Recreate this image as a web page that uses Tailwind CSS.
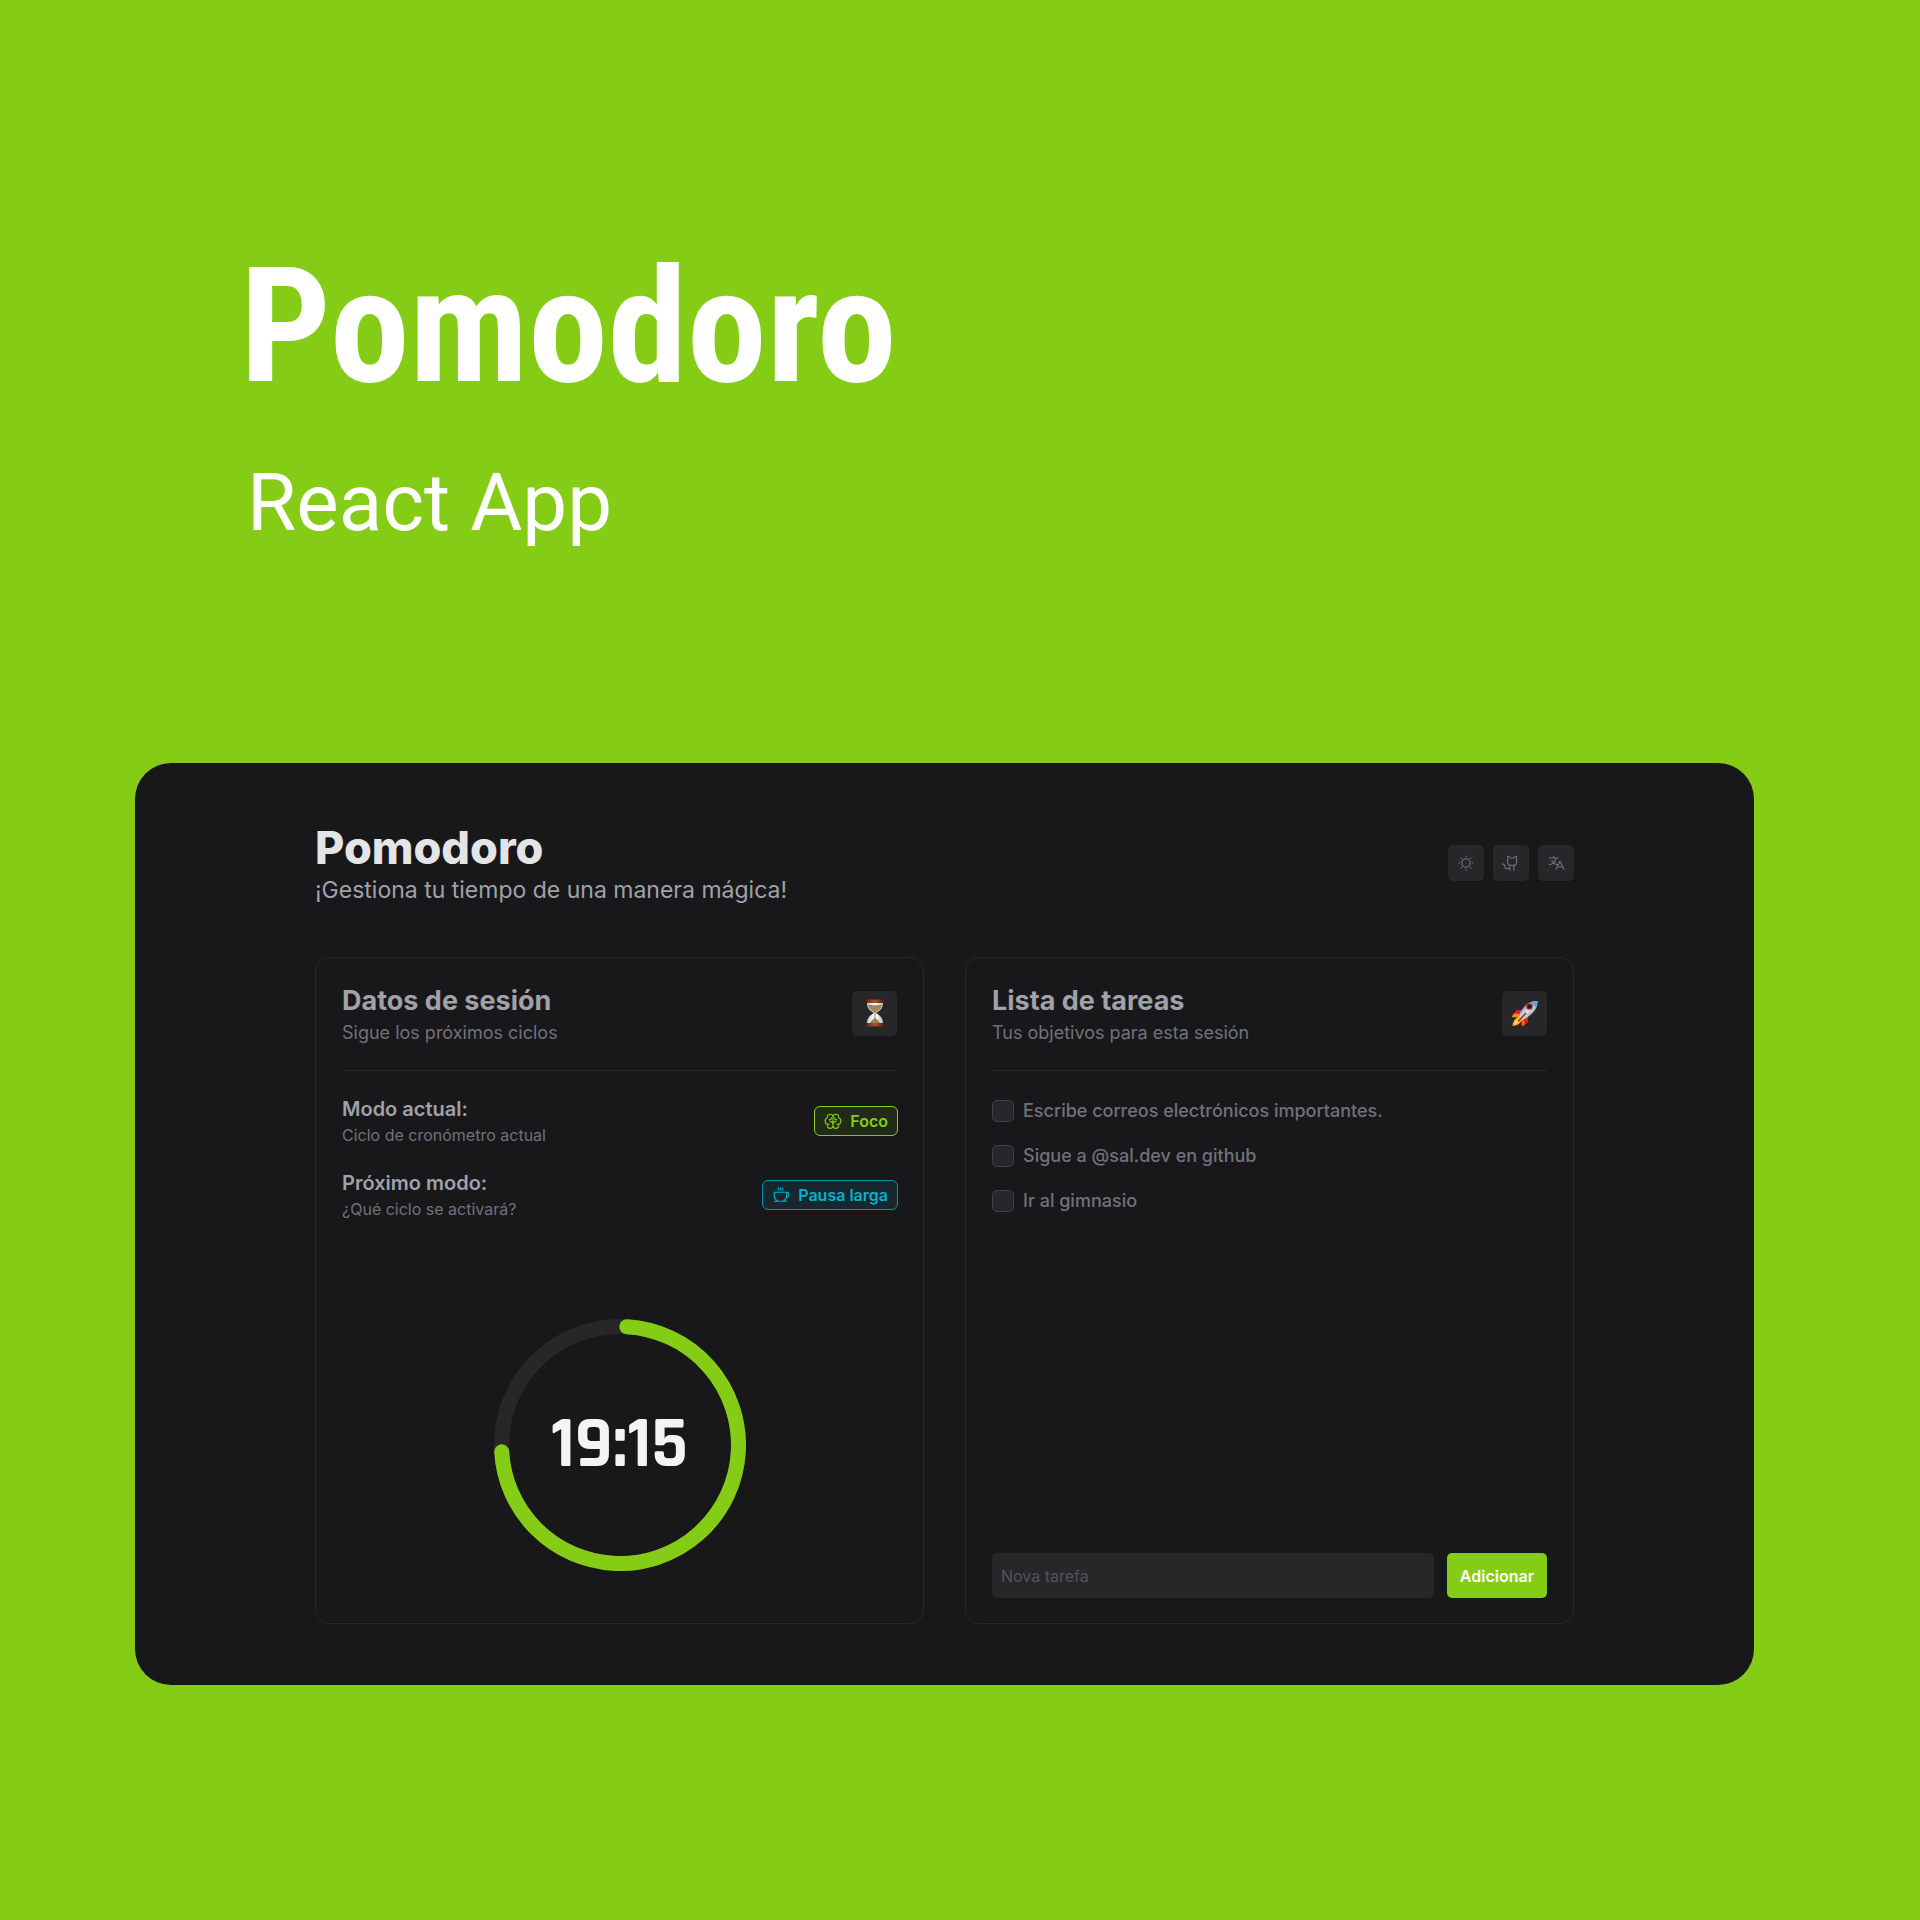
<!DOCTYPE html>
<html lang="es">
<head>
<meta charset="utf-8">
<meta name="viewport" content="width=device-width, initial-scale=1">
<title>Pomodoro</title>
<script src="https://cdn.jsdelivr.net/npm/@tailwindcss/browser@4"></script>
</head>
<body class="min-h-screen bg-[#84cc16] font-['Inter',sans-serif]">

<header class="pt-[247px] pl-[240px] text-white">
  <h1 class="font-['Roboto_Condensed','Roboto',sans-serif] text-[160px] leading-[160px] font-bold">Pomodoro</h1>
  <p class="mt-14 pl-[7px] font-['Roboto',sans-serif] text-[80px] leading-[80px]">React App</p>
</header>

<main class="mt-[220px] mr-[166px] ml-[135px] rounded-[36px] bg-[#18181a] px-[180px] pt-[62px] pb-[61px]">
  <div class="flex items-center justify-between">
    <div>
      <h2 class="text-[45px] leading-[45px] font-extrabold text-[#e4e4e7]">Pomodoro</h2>
      <p class="mt-[9px] text-[23px] leading-[22px] text-[#a1a1aa]">¡Gestiona tu tiempo de una manera mágica!</p>
    </div>
    <nav class="flex gap-[9px]" aria-label="Opciones">
      <button type="button" aria-label="Tema" class="grid size-9 place-items-center rounded-[5px] bg-[#27272a] text-[#71717a]">
        <svg class="size-[18px]" viewBox="0 0 256 256" fill="none" stroke="currentColor" stroke-width="16" stroke-linecap="round" stroke-linejoin="round"><circle cx="128" cy="128" r="60"/><path d="M128 36v-8M62.9 62.9l-5.6-5.6M36 128h-8M62.9 193.1l-5.6 5.6M128 220v8M193.1 193.1l5.6 5.6M220 128h8M193.1 62.9l5.6-5.6"/></svg>
      </button>
      <a href="#github" aria-label="GitHub" class="grid size-9 place-items-center rounded-[5px] bg-[#27272a] text-[#71717a]">
        <svg class="size-[18px]" viewBox="0 0 256 256" fill="none" stroke="currentColor" stroke-width="16" stroke-linecap="round" stroke-linejoin="round"><path d="M112 232v-72M168 232v-72M112 208H72a32 32 0 0 1-32-32A32 32 0 0 0 8 144"/><path d="M208 104v8a48 48 0 0 1-48 48h-32a48 48 0 0 1-48-48v-8a49.300 49.300 0 0 1 4-27.400L80 32a51.900 51.900 0 0 1 43.700 24h40.600A51.900 51.900 0 0 1 208 32l-4 44.600A49.300 49.300 0 0 1 208 104Z"/></svg>
      </a>
      <button type="button" aria-label="Idioma" class="grid size-9 place-items-center rounded-[5px] bg-[#27272a] text-[#71717a]">
        <svg class="size-[18px]" viewBox="0 0 256 256" fill="none" stroke="currentColor" stroke-width="16" stroke-linecap="round" stroke-linejoin="round"><path d="M240 216l-56-112-56 112M144 184h80M96 32v24M32 56h128M128 56a96 96 0 0 1-96 96M69.500 88A96 96 0 0 0 152 150"/></svg>
      </button>
    </nav>
  </div>

  <div class="mt-14 grid grid-cols-2 gap-[41px]">
    <section class="flex flex-col rounded-[14px] border border-[#27272a] px-[26px] pt-[23px] pb-[25px]">
      <div class="flex items-center justify-between border-b border-[#27272a] pb-[25px]">
        <div>
          <h3 class="text-[27px] leading-10 font-bold text-[#a1a1aa]">Datos de sesión</h3>
          <p class="text-lg leading-6 text-[#71717a]">Sigue los próximos ciclos</p>
        </div>
        <div class="grid size-[45px] place-items-center rounded-[5px] bg-[#27272a]">
          <svg class="h-[28px] w-[20px]" viewBox="0 0 20 28" role="img" aria-label="Reloj de arena">
            <defs>
              <linearGradient id="wood" x2="1"><stop offset="0" stop-color="#5a2411"/><stop offset=".5" stop-color="#a9572c"/><stop offset="1" stop-color="#4a1c0d"/></linearGradient>
              <linearGradient id="glass" x2="1"><stop offset="0" stop-color="#c3cad6"/><stop offset=".5" stop-color="#fff"/><stop offset="1" stop-color="#b6bdca"/></linearGradient>
            </defs>
            <path d="M2 4h16c0 5-2.500 7.500-7 10 4.500 2.500 7 6 7 10H2c0-4 2.500-7.500 7-10C4.500 11.500 2 9 2 4Z" fill="url(#glass)"/>
            <path d="M3 5.500c4 1 10 1 14 0-.5 4-3 6-6.500 8h-1C6 11.500 3.500 9.500 3 5.500Z" fill="#a58263"/>
            <path d="M9.500 13h1v6c1.500 1.500 3.500 3 4.500 5H5c1-2 3-3.500 4.500-5Z" fill="#a3804f"/>
            <rect x="1" y=".5" width="18" height="3.500" rx="1.500" fill="url(#wood)"/>
            <rect x="1" y="24" width="18" height="3.500" rx="1.500" fill="url(#wood)"/>
          </svg>
        </div>
      </div>

      <div class="mt-6 flex flex-col gap-[22px]">
        <div class="flex items-center justify-between">
          <div>
            <h4 class="text-xl leading-7 font-semibold text-[#a1a1aa]">Modo actual:</h4>
            <p class="text-base leading-6 text-[#71717a]">Ciclo de cronómetro actual</p>
          </div>
          <span class="-mr-px flex h-[30px] items-center gap-2 rounded-md border border-[#84cc16] bg-[#84cc16]/10 px-[9px] text-base font-semibold text-[#84cc16]">
            <svg class="size-[18px]" viewBox="0 0 256 256" fill="none" stroke="currentColor" stroke-width="16" stroke-linecap="round" stroke-linejoin="round"><path d="M88 136a40 40 0 0 1 40 40v16a40 40 0 0 1-80 0v-.7M128 176a40 40 0 0 1 40-40M208 191.300v.7a40 40 0 0 1-80 0M72 176h-8A48 48 0 0 1 48 82.700V72a40 40 0 0 1 80 0v104M184 176h8a48 48 0 0 0 16-93.300V72a40 40 0 0 0-80 0M184 112h-4a28 28 0 0 1-28-28v-4M72 112h4a28 28 0 0 0 28-28v-4"/></svg>
            Foco
          </span>
        </div>
        <div class="flex items-center justify-between">
          <div>
            <h4 class="text-xl leading-7 font-semibold text-[#a1a1aa]">Próximo modo:</h4>
            <p class="text-base leading-6 text-[#71717a]">¿Qué ciclo se activará?</p>
          </div>
          <span class="-mr-px flex h-[30px] items-center gap-2 rounded-md border border-[#0891b2] bg-[#06b6d4]/10 px-[9px] text-base font-semibold text-[#06b0d0]">
            <svg class="size-[18px]" viewBox="0 0 256 256" fill="none" stroke="currentColor" stroke-width="16" stroke-linecap="round" stroke-linejoin="round"><path d="M83.300 216A88 88 0 0 1 32 136V88h176v48a88 88 0 0 1-51.300 80M208 88a32 32 0 0 1 32 32v8a32 32 0 0 1-32 32h-3.400M88 24v32M120 24v32M152 24v32M32 216h176"/></svg>
            Pausa larga
          </span>
        </div>
      </div>

      <div class="mt-[98px] mb-[27px] grid place-items-center">
        <svg class="col-start-1 row-start-1 size-[252px]" viewBox="0 0 252 252" fill="none" stroke-width="15" aria-hidden="true">
          <circle cx="126" cy="126" r="118.500" stroke="#27272a"/>
          <circle cx="126" cy="126" r="118.500" stroke="#84cc16" stroke-linecap="round" pathLength="360" stroke-dasharray="263.400 360" transform="rotate(-86.700 126 126)"/>
        </svg>
        <time class="col-start-1 row-start-1 font-['Rajdhani','Roboto_Condensed',sans-serif] text-7xl leading-none font-bold text-[#f4f4f5]">19:15</time>
      </div>
    </section>

    <section class="flex flex-col rounded-[14px] border border-[#27272a] px-[26px] pt-[23px] pb-[25px]">
      <div class="flex items-center justify-between border-b border-[#27272a] pb-[25px]">
        <div>
          <h3 class="text-[27px] leading-10 font-bold text-[#a1a1aa]">Lista de tareas</h3>
          <p class="text-lg leading-6 text-[#71717a]">Tus objetivos para esta sesión</p>
        </div>
        <div class="grid size-[45px] place-items-center rounded-[5px] bg-[#27272a]">
          <svg class="size-[27px]" viewBox="0 0 27 27" role="img" aria-label="Cohete">
            <defs>
              <linearGradient id="hull" x1="0" y1="0" x2="1" y2="1"><stop offset=".2" stop-color="#4d8fc4"/><stop offset=".5" stop-color="#dfe6ec"/><stop offset=".8" stop-color="#7d8a96"/></linearGradient>
            </defs>
            <path d="M11 10H5.500L.5 17l7 .5Z" fill="#e5200f"/>
            <path d="M.5 17l2.500-3.500 6 .5-1.500 3.500Z" fill="#f98a14"/>
            <path d="M17 16v6l-6 4.500-.5-7Z" fill="#e5200f"/>
            <path d="M11 26.500l3-2.300-1.500-5-2 .8Z" fill="#f9641a"/>
            <path d="M26.500 1C19 1 14 4 9.500 12l-2 5.500 3 3 5-2.500C23 13 26.500 8 26.500 1Z" fill="url(#hull)"/>
            <path d="M26.500 1c-2.500 0-5 .5-7 1.500l5 5c1.300-2 2-4 2-6.500Z" fill="#5fa3d8"/>
            <circle cx="18.500" cy="6.500" r="3.300" fill="#b3261e"/>
            <circle cx="18.500" cy="6.500" r="2" fill="#1d1d22"/>
            <path d="M8 17c-4 1-6 4-6.500 9 4.500-.5 8-2 9-6Z" fill="#f9b21c"/>
            <path d="M7.500 18.500c-2 1.500-3.500 3.500-4.500 6 2.500-1 5-2.500 6-4.500Z" fill="#ffe566"/>
            <path d="M15 13l-8 8.500" stroke="#c8190f" stroke-width="1.500"/>
          </svg>
        </div>
      </div>

      <ul class="mt-[29px] flex flex-col gap-[23px]">
        <li><label class="flex items-center gap-[9px] text-lg leading-[22px] font-medium text-[#71717a]"><input type="checkbox" class="size-[22px] appearance-none rounded-[5px] border border-[#3f3f46] bg-[#27272a]">Escribe correos electrónicos importantes.</label></li>
        <li><label class="flex items-center gap-[9px] text-lg leading-[22px] font-medium text-[#71717a]"><input type="checkbox" class="size-[22px] appearance-none rounded-[5px] border border-[#3f3f46] bg-[#27272a]">Sigue a @sal.dev en github</label></li>
        <li><label class="flex items-center gap-[9px] text-lg leading-[22px] font-medium text-[#71717a]"><input type="checkbox" class="size-[22px] appearance-none rounded-[5px] border border-[#3f3f46] bg-[#27272a]">Ir al gimnasio</label></li>
      </ul>

      <form class="mt-auto flex gap-[13px]">
        <input type="text" aria-label="Nova tarefa" placeholder="Nova tarefa" class="h-[45px] min-w-0 flex-1 rounded-[5px] bg-[#27272a] px-[9px] text-base text-[#a1a1aa] placeholder:text-[#52525b]">
        <button type="button" class="h-[45px] rounded-[5px] bg-[#84cc16] px-[13px] text-base font-semibold text-white">Adicionar</button>
      </form>
    </section>
  </div>
</main>

</body>
</html>
